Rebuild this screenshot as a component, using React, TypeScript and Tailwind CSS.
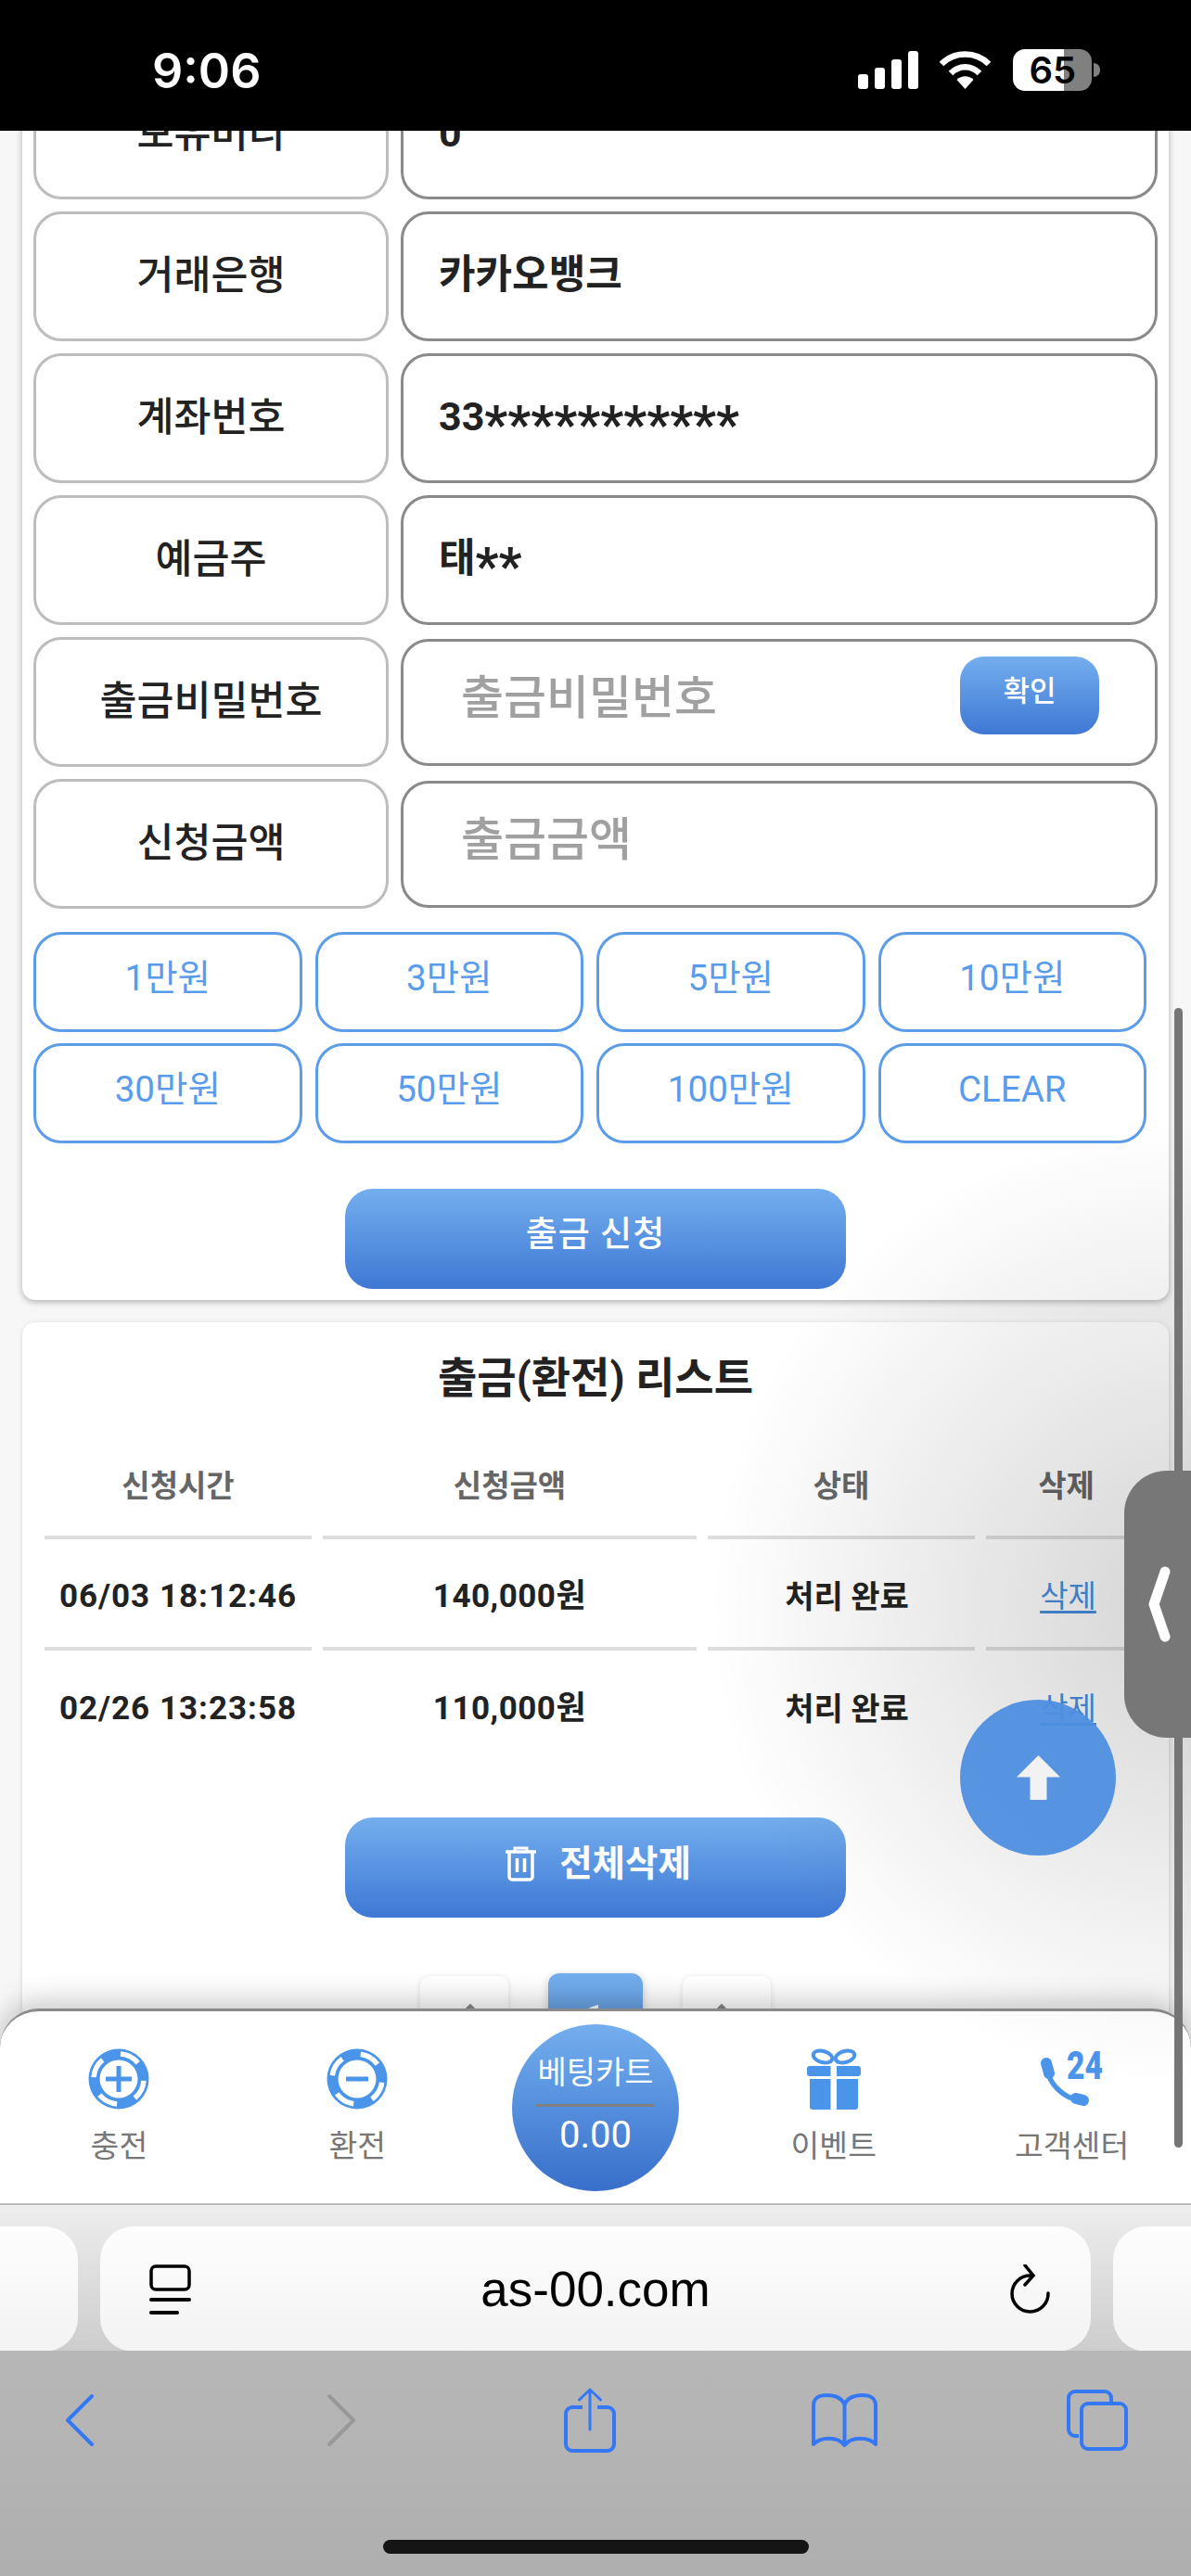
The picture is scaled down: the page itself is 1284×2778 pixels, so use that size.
const labelBox = "flex h-[140px] w-[383px] items-center justify-center rounded-[30px] border-[3px] border-[#bdbdbd] bg-white text-[43.5px] font-medium text-[#222]";
const valueBox = "flex w-[816px] items-center rounded-[30px] border-[3px] border-[#8a8a8a] bg-white";
const amountBtn = "flex h-[108px] items-center justify-center rounded-[30px] border-[3px] border-[#5c9ce8] bg-white pb-2 text-[38.5px] text-[#5a9cec]";
const blueBtn = "flex h-[108px] w-[540px] items-center justify-center rounded-[30px] bg-gradient-to-b from-[#74aeee] to-[#3f78d4] pb-2 text-white";

const amounts = ["1만원", "3만원", "5만원", "10만원", "30만원", "50만원", "100만원", "CLEAR"];

function StatusBar() {
  return (
    <div className="relative z-20 flex h-[141px] shrink-0 items-start bg-black pt-[45px] pl-[164px] text-white">
      <span className="text-[52px] leading-[64px] font-semibold [font-family:Inter,sans-serif]">9:06</span>
      <div className="ml-[644px] flex items-end gap-[7px] pt-[10px]">
        <span className="h-[16px] w-[11px] rounded-[3px] bg-white" />
        <span className="h-[23px] w-[11px] rounded-[3px] bg-white" />
        <span className="h-[32px] w-[11px] rounded-[3px] bg-white" />
        <span className="h-[41px] w-[11px] rounded-[3px] bg-white" />
      </div>
      <svg className="mt-[10px] ml-[22px]" width="57" height="41" viewBox="0 0 57 41" fill="none">
        <path d="M3 14C17 0 40 0 54 14" stroke="white" strokeWidth="6.5" />
        <path d="M13 24C22 15 35 15 44 24" stroke="white" strokeWidth="6.5" />
        <path d="M19.5 31C24.5 26 32.5 26 37.5 31L28.5 41Z" fill="white" />
      </svg>
      <div className="mt-[8px] ml-[23px] flex h-[45px] w-[85px] items-center justify-center rounded-[13px] bg-[linear-gradient(90deg,#ffffff_65%,#808080_65%)]">
        <span className="text-[40px] leading-[45px] font-semibold text-black [font-family:Inter,sans-serif]">65</span>
      </div>
      <span className="mt-[23px] ml-[2px] h-[15px] w-[7px] rounded-r-full bg-[#808080]" />
    </div>
  );
}

function FormRow({ label, value, stars }: { label: string; value: string; stars?: string }) {
  return (
    <div className="flex justify-between">
      <div className={labelBox}>{label}</div>
      <div className={`${valueBox} h-[140px] pb-1 pl-[38px] text-[43px] leading-[50px] font-bold text-[#222]`}>
        <span>
          {value}
          {stars && <span className="inline-block translate-y-[13px] text-[55px] leading-[30px]">{stars}</span>}
        </span>
      </div>
    </div>
  );
}

function InputRow({ label, placeholder, children }: { label: string; placeholder: string; children?: React.ReactNode }) {
  return (
    <div className="flex items-center justify-between">
      <div className={labelBox}>{label}</div>
      <div className={`${valueBox} h-[137px] justify-between pr-[60px] pb-2 pl-[62px] text-[50px] font-medium text-[#a0a0a0]`}>
        <span>{placeholder}</span>
        {children}
      </div>
    </div>
  );
}

function HistoryRow({ time, amount, last }: { time: string; amount: string; last?: boolean }) {
  const cell = `flex items-center justify-center ${last ? "h-[110px]" : "h-[112px] border-b-4 border-[#dedede]"}`;
  return (
    <>
      <div className={`${cell} text-[35px] font-bold tracking-[1px] text-[#222]`}>{time}</div>
      <div className={`${cell} text-[35px] font-bold tracking-[0.5px] text-[#222]`}>{amount}</div>
      <div className={`${cell} pl-3 text-[34px] font-bold text-[#222]`}>처리 완료</div>
      <div className={`${cell} pl-1 text-[33px] text-[#4a8fe0] underline underline-offset-4`}>삭제</div>
    </>
  );
}

function Chip({ minus }: { minus?: boolean }) {
  return (
    <svg width="66" height="66" viewBox="0 0 66 66">
      <circle cx="33" cy="33" r="32.5" fill="#4a94ea" />
      <circle cx="33" cy="33" r="27" fill="none" stroke="white" strokeWidth="5.5" pathLength={360} strokeDasharray="46 44" transform={minus ? "rotate(-82 33 33)" : "rotate(-86 33 33)"} />
      <circle cx="33" cy="33" r="20.5" fill="white" />
      <rect x={minus ? 21 : 19} y="30.5" width={minus ? 24 : 28} height="5" fill="#4a94ea" />
      {!minus && <rect x="30.5" y="19" width="5" height="28" fill="#4a94ea" />}
    </svg>
  );
}

function Gift() {
  return (
    <svg width="58" height="66" viewBox="0 0 58 66" fill="#4a94ea">
      <ellipse cx="17" cy="9" rx="10.5" ry="6" fill="none" stroke="#4a94ea" strokeWidth="4" transform="rotate(16 17 9)" />
      <ellipse cx="41" cy="9" rx="10.5" ry="6" fill="none" stroke="#4a94ea" strokeWidth="4" transform="rotate(-16 41 9)" />
      <path d="M3 19H25.5V30H3A3 3 0 0 1 0 27V22A3 3 0 0 1 3 19Z" />
      <path d="M32 19H55A3 3 0 0 1 58 22V27A3 3 0 0 1 55 30H32Z" />
      <path d="M3 33H25.5V66H6A3 3 0 0 1 3 63Z" />
      <path d="M32 33H55V63A3 3 0 0 1 52 66H32Z" />
    </svg>
  );
}

function Phone24() {
  return (
    <svg width="67" height="66" viewBox="0 0 67 66" fill="none">
      <path d="M7 22C9 38 24 54 43 56" stroke="#4a94ea" strokeWidth="5.5" />
      <path d="M6 16L9 27" stroke="#4a94ea" strokeWidth="12" strokeLinecap="round" />
      <path d="M38 54L46 56" stroke="#4a94ea" strokeWidth="12" strokeLinecap="round" />
      <text x="28" y="33" fill="#4a94ea" fontSize="42" fontWeight="900" fontFamily="Roboto, sans-serif" textLength="39" lengthAdjust="spacingAndGlyphs">24</text>
    </svg>
  );
}

function TrashIcon() {
  return (
    <svg width="33" height="38" viewBox="0 0 33 38" fill="none" stroke="white" strokeWidth="3.5">
      <path d="M0 6H33" />
      <path d="M10 6V2H23V6" strokeWidth="3" />
      <path d="M4 6V33A3 3 0 0 0 7 36H26A3 3 0 0 0 29 33V6" />
      <path d="M12.5 13V28M20.5 13V28" />
    </svg>
  );
}

function NavItem({ label, children }: { label: string; children: React.ReactNode }) {
  return (
    <div className="flex flex-col items-center pt-[40px]">
      <div className="flex h-[66px] items-center justify-center">{children}</div>
      <span className="mt-[20px] text-[33.5px] leading-[40px] text-[#777]">{label}</span>
    </div>
  );
}

function BottomNav() {
  return (
    <div className="relative z-10 -mt-[40px] grid h-[210px] shrink-0 grid-cols-5 rounded-t-[42px] border-t-[3px] border-[#8a8a8a] bg-white shadow-[0_-8px_30px_rgba(0,0,0,0.22)]">
      <NavItem label="충전"><Chip /></NavItem>
      <NavItem label="환전"><Chip minus /></NavItem>
      <div className="flex justify-center pt-[14px]">
        <div className="flex h-[180px] w-[180px] flex-col items-center rounded-full bg-gradient-to-b from-[#74aeee] to-[#386fcb] pt-[31px] text-white">
          <span className="text-[34px] leading-[42px]">베팅카트</span>
          <span className="mt-[13px] h-[3px] w-[128px] bg-[#808080]" />
          <span className="mt-[9px] text-[40px] leading-[44px]">0.00</span>
        </div>
      </div>
      <NavItem label="이벤트"><Gift /></NavItem>
      <NavItem label="고객센터"><Phone24 /></NavItem>
    </div>
  );
}

function UrlBar() {
  return (
    <div className="relative z-10 flex h-[159px] shrink-0 justify-between border-t-2 border-[#bcbcbc] bg-gradient-to-b from-[#eeeeee] to-[#cdcdcd] pt-[23px]">
      <div className="h-[135px] w-[84px] rounded-r-[36px] bg-gradient-to-b from-[#fdfdfd] to-[#f3f3f3]" />
      <div className="grid h-[135px] w-[1068px] grid-cols-[1fr_auto_1fr] items-center rounded-[36px] bg-gradient-to-b from-[#fdfdfd] to-[#f3f3f3] px-[53px]">
        <svg width="45" height="54" viewBox="0 0 45 54" fill="none" stroke="black" strokeWidth="3.5">
          <rect x="2" y="2" width="41" height="25" rx="5" />
          <path d="M2 38H43" strokeWidth="4" strokeLinecap="round" />
          <path d="M2 52H30" strokeWidth="4" strokeLinecap="round" />
        </svg>
        <span className="text-[53px] leading-none text-black [font-family:'Liberation_Sans',sans-serif]">as-00.com</span>
        <svg className="-mr-[9px] justify-self-end" width="43" height="54" viewBox="0 0 43 54" fill="none" stroke="black" strokeWidth="3.5" strokeLinecap="round">
          <path d="M22 12A19.5 19.5 0 1 0 41 31" />
          <path d="M16 1L25 12L16 22" />
        </svg>
      </div>
      <div className="h-[135px] w-[84px] rounded-l-[36px] bg-gradient-to-b from-[#fdfdfd] to-[#f3f3f3]" />
    </div>
  );
}

function Toolbar() {
  return (
    <div className="relative z-10 flex-1 bg-gradient-to-b from-[#b7b7b7] to-[#afafaf]">
      <div className="flex h-[150px] items-center pl-[70px]">
        <svg width="32" height="58" viewBox="0 0 32 58" fill="none" stroke="#3478f6" strokeWidth="4" strokeLinecap="round" strokeLinejoin="round">
          <path d="M29 3L3 29L29 55" />
        </svg>
        <svg className="ml-[250px]" width="32" height="58" viewBox="0 0 32 58" fill="none" stroke="#989898" strokeWidth="4" strokeLinecap="round" strokeLinejoin="round">
          <path d="M3 3L29 29L3 55" />
        </svg>
        <svg className="ml-[224px]" width="56" height="70" viewBox="0 0 56 70" fill="none" stroke="#3478f6" strokeWidth="4">
          <path d="M20 21H9A7 7 0 0 0 2 28V61A7 7 0 0 0 9 68H47A7 7 0 0 0 54 61V28A7 7 0 0 0 47 21H36" />
          <path d="M28 45V2M16.5 13L28 2L39.5 13" strokeWidth="3" strokeLinecap="round" strokeLinejoin="round" />
        </svg>
        <svg className="ml-[211px]" width="71" height="58" viewBox="0 0 71 58" fill="none" stroke="#3478f6" strokeWidth="4" strokeLinejoin="round">
          <path d="M35.5 12C32 4 24 2 16 2C9 2 2 5 2 13V55C9 47 28 46 35.5 56C43 46 62 47 69 55V13C69 5 62 2 55 2C47 2 39 4 35.5 12Z" />
          <path d="M35.5 12V56" />
        </svg>
        <svg className="ml-[204px]" width="66" height="66" viewBox="0 0 66 66" fill="none" stroke="#3478f6" strokeWidth="4">
          <path d="M13 50H9A7 7 0 0 1 2 43V9A7 7 0 0 1 9 2H41A7 7 0 0 1 48 9V15" />
          <rect x="16" y="15" width="48" height="49" rx="7" />
        </svg>
      </div>
      <div className="mt-[54px] flex justify-center">
        <span className="h-[15px] w-[459px] rounded-full bg-[#151515]" />
      </div>
    </div>
  );
}

export default function App() {
  return (
    <div className="relative flex h-[2778px] w-[1284px] flex-col overflow-hidden bg-[#f7f7f7] [font-family:Roboto,'Noto_Sans_CJK_KR',sans-serif]">
      <StatusBar />

      <main className="h-[2065px] shrink-0 overflow-hidden px-[24px]">
        <section className="-mt-[66px] rounded-[14px] bg-white px-[12px] pb-[12px] shadow-[0_2px_7px_rgba(0,0,0,0.3)]">
          <div className="flex flex-col gap-[13px]">
            <FormRow label="보유머니" value="0" />
            <FormRow label="거래은행" value="카카오뱅크" />
            <FormRow label="계좌번호" value="33" stars="***********" />
            <FormRow label="예금주" value="태" stars="**" />
            <InputRow label="출금비밀번호" placeholder="출금비밀번호">
              <button className="mb-[6px] flex h-[84px] w-[150px] items-center justify-center rounded-[26px] bg-gradient-to-b from-[#74aeee] to-[#3f78d4] pb-2 text-[31px] text-white">확인</button>
            </InputRow>
            <InputRow label="신청금액" placeholder="출금금액" />
          </div>

          <div className="mt-[25px] grid w-[1200px] grid-cols-4 gap-x-[14px] gap-y-[12px]">
            {amounts.map((a) => (
              <button key={a} className={amountBtn}>{a}</button>
            ))}
          </div>

          <div className="mt-[49px] flex justify-center">
            <button className={`${blueBtn} text-[37px] font-medium tracking-[1px]`}>출금 신청</button>
          </div>
        </section>

        <section className="mt-[24px] h-[900px] rounded-[14px] bg-white pt-[36px] shadow-[0_1px_5px_rgba(0,0,0,0.15)]">
          <h2 className="text-center text-[46px] leading-[48px] font-bold text-[#222]">출금(환전) 리스트</h2>

          <div className="mt-[40px] ml-[24px] grid grid-cols-[288px_403px_288px_173px] gap-x-3 gap-y-2">
            {["신청시간", "신청금액", "상태", "삭제"].map((h) => (
              <div key={h} className="flex h-[110px] items-center justify-center border-b-4 border-[#dedede] text-[33px] font-bold text-[#666]">{h}</div>
            ))}
            <HistoryRow time="06/03 18:12:46" amount="140,000원" />
            <HistoryRow time="02/26 13:23:58" amount="110,000원" last />
          </div>

          <div className="mt-[62px] flex justify-center">
            <button className={`${blueBtn} gap-[25px] pl-[6px] text-[38.5px] font-bold`}>
              <TrashIcon />
              전체삭제
            </button>
          </div>

          <div className="mt-[60px] flex items-start justify-center gap-[43px]">
            <span className="mt-[3px] flex h-[100px] w-[95px] justify-center rounded-[10px] bg-white pt-[34px] shadow-[0_1px_6px_rgba(0,0,0,0.12)]">
              <span className="ml-[12px] h-[20px] w-[20px] rotate-45 bg-[#888]" />
            </span>
            <span className="flex h-[103px] w-[102px] justify-center rounded-[12px] bg-gradient-to-b from-[#74aeee] to-[#5a92d8] pt-[30px] text-[36px] leading-none text-white shadow-[0_2px_10px_rgba(0,0,0,0.2)]">1</span>
            <span className="mt-[3px] flex h-[100px] w-[95px] justify-center rounded-[10px] bg-white pt-[34px] shadow-[0_1px_6px_rgba(0,0,0,0.12)]">
              <span className="mr-[12px] h-[20px] w-[20px] rotate-45 bg-[#888]" />
            </span>
          </div>
        </section>
      </main>

      <BottomNav />
      <UrlBar />
      <Toolbar />

      {/* soft glow round the side handle, then scrollbar, handle and scroll-to-top on top of the page */}
      <span className="pointer-events-none absolute top-[1210px] left-[764px] z-[25] h-[1040px] w-[1040px] rounded-full bg-[radial-gradient(closest-side,rgba(0,0,0,0.17),rgba(0,0,0,0))]" />
      <span className="absolute top-[1087px] left-[1266px] z-30 h-[1229px] w-[9px] rounded-full bg-[#757575]" />
      <div className="absolute top-[1586px] left-[1212px] z-30 flex h-[288px] w-[72px] items-center rounded-l-[46px] bg-[#777] pl-[26px]">
        <svg width="26" height="82" viewBox="0 0 26 82" fill="none" stroke="white" strokeWidth="11" strokeLinecap="round" strokeLinejoin="round">
          <path d="M18 6L6 41L18 76" />
        </svg>
      </div>
      <button className="absolute top-[1833px] left-[1035px] z-30 flex h-[168px] w-[168px] items-center justify-center rounded-full bg-[#4e8ee0]/95">
        <svg width="47" height="48" viewBox="0 0 47 48" fill="#f2f2f2">
          <path d="M23.5 0L47 23.5H32.5V48H14.5V23.5H0Z" />
        </svg>
      </button>
    </div>
  );
}
